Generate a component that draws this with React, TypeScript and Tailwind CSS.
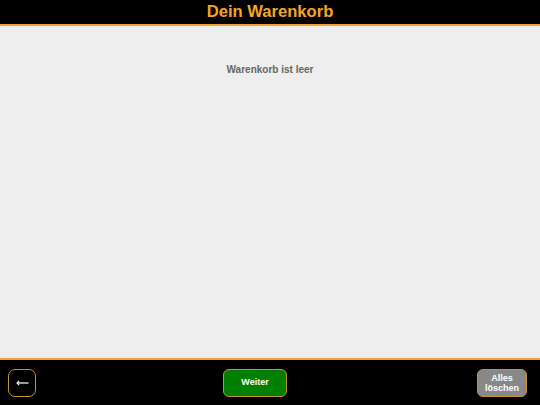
import React from "react";

export default function App() {
  return (
    <div
      className="w-[540px] h-[405px] flex flex-col bg-[#eeeeee] overflow-hidden"
      style={{ fontFamily: '"Liberation Sans", Arial, sans-serif' }}
    >
      <header className="h-[26px] shrink-0 bg-black border-b-2 border-[#f0a030] flex items-center justify-center">
        <h1 className="text-[16.6px] leading-[20px] font-bold text-[#f5a623]">Dein Warenkorb</h1>
      </header>
      <main className="flex-1 flex justify-center pt-[38px]">
        <p className="text-[10px] leading-[12px] font-bold text-[#666666]">Warenkorb ist leer</p>
      </main>
      <footer className="h-[47px] shrink-0 bg-black border-t-2 border-[#f0a030] flex items-start justify-between pt-[9px] px-[8px]">
        <button className="w-[28px] h-[28px] rounded-[7px] border border-[#c8902e] bg-black flex items-center justify-center text-white">
          <svg width="13" height="6" viewBox="0 0 13 6">
            <path d="M1 3H12.5" stroke="#f0f0f0" strokeWidth="1.3" />
            <path d="M3.2 0.8L1 3L3.2 5.2" stroke="#f0f0f0" strokeWidth="1.2" fill="none" />
          </svg>
        </button>
        <button className="ml-[187px] w-[64px] h-[28px] rounded-[6px] border border-[#c8902e] bg-[#008000] text-white text-[9px] font-bold flex items-center justify-center">
          Weiter
        </button>
        <button className="ml-auto mr-[5px] w-[50px] h-[28px] rounded-[6px] border border-[#c8902e] bg-[#888888] text-white text-[9px] leading-[10px] font-bold flex flex-col items-center justify-center">
          <span>Alles</span>
          <span>löschen</span>
        </button>
      </footer>
    </div>
  );
}
